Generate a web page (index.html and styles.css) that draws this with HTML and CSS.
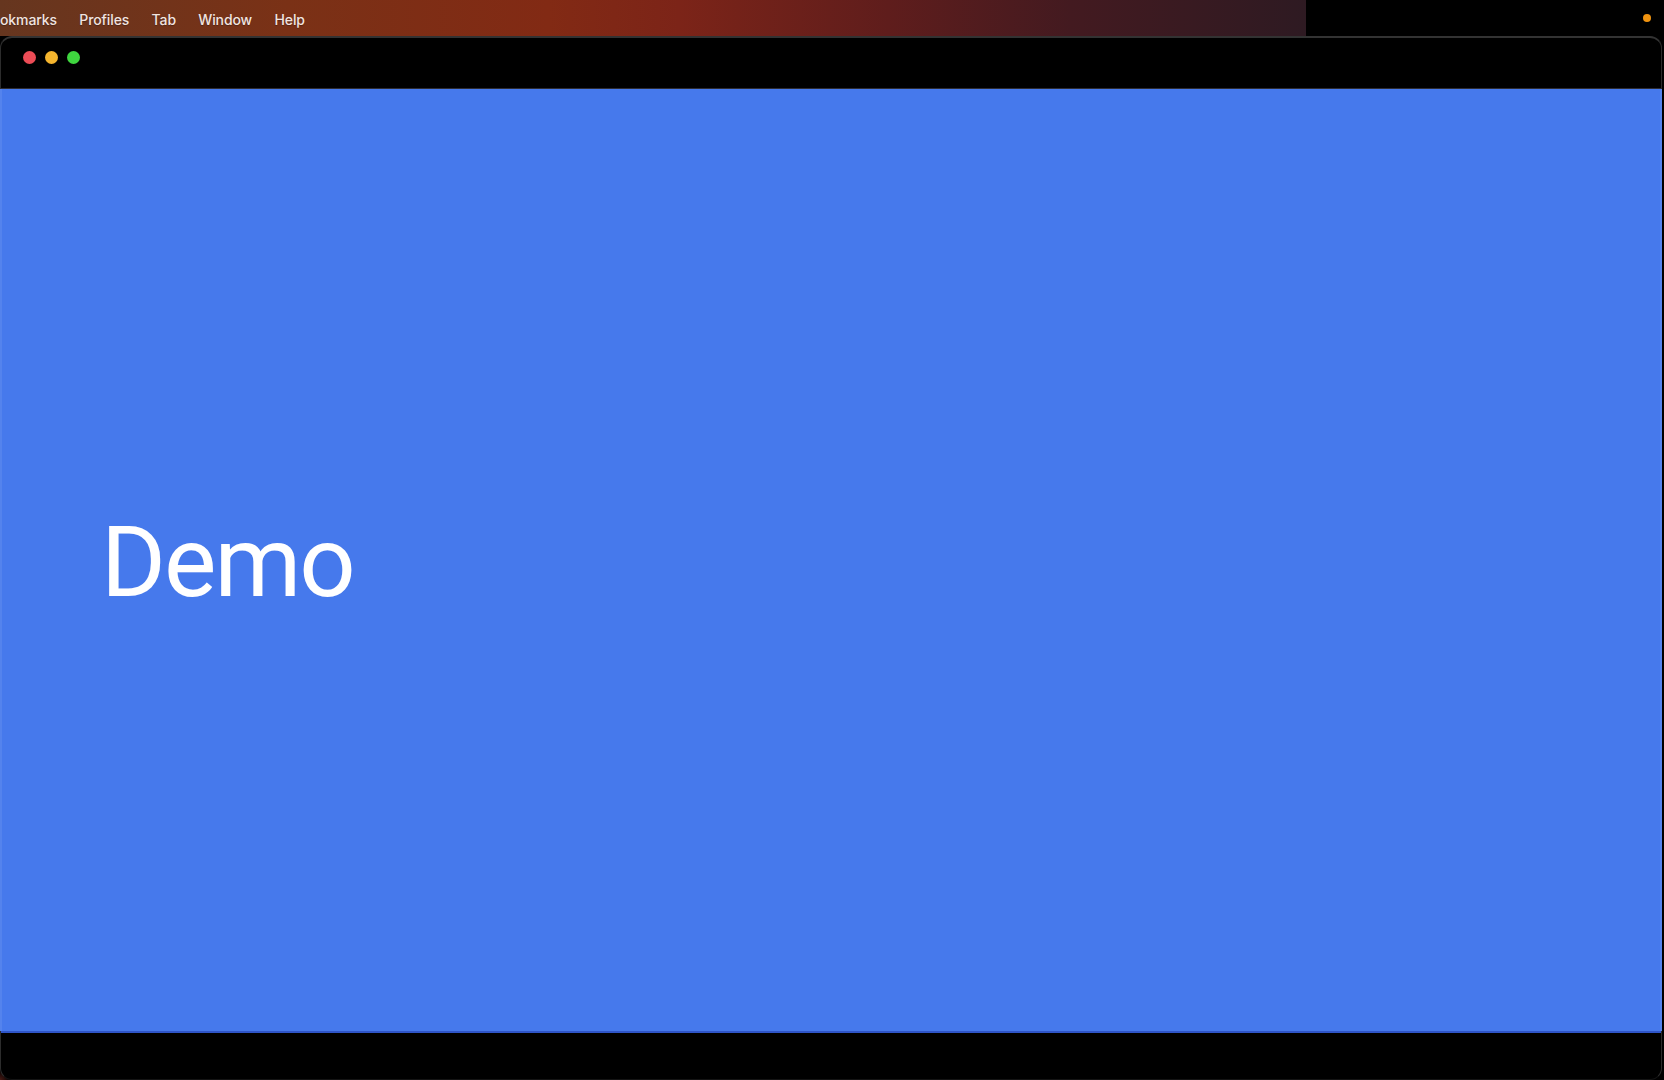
FILE: index.html
```html
<!DOCTYPE html>
<html lang="en">
<head>
    <meta charset="UTF-8">
    <meta name="viewport" content="width=device-width, initial-scale=1.0">
    <title>Demo</title>
    <link rel="stylesheet" href="styles.css">
</head>
<body>
    <div class="menubar">
        <div class="menubar-wallpaper">
            <nav class="menu">
                <span class="menu-item">okmarks</span>
                <span class="menu-item">Profiles</span>
                <span class="menu-item">Tab</span>
                <span class="menu-item">Window</span>
                <span class="menu-item">Help</span>
            </nav>
        </div>
        <div class="menubar-status">
            <span class="mic-dot"></span>
        </div>
    </div>
    <div class="window">
        <div class="titlebar">
            <span class="light light-close"></span>
            <span class="light light-min"></span>
            <span class="light light-max"></span>
        </div>
        <main class="slide">
            <h1 class="slide-title">Demo</h1>
        </main>
        <div class="window-bottom"></div>
    </div>
</body>
</html>
```

FILE: styles.css
```css
html, body {
    height: 100%;
}

body {
    margin: 0;
    background: radial-gradient(circle at 0 100%, #4a1a14 0, transparent 10px), #000;
    display: flex;
    flex-direction: column;
    overflow: hidden;
    font-family: 'Inter', 'Liberation Sans', sans-serif;
}

.menubar {
    height: 36px;
    flex-shrink: 0;
    display: flex;
}

.menubar-wallpaper {
    width: 1306px;
    background: linear-gradient(90deg, #66361f 0%, #7a3116 22%, #822a14 42%, #7c2418 52%, #5f1d1c 68%, #431a20 82%, #2e1a22 100%);
}

.menubar-status {
    flex: 1;
    display: flex;
    justify-content: flex-end;
    align-items: center;
    padding-right: 13px;
}

.mic-dot {
    width: 8px;
    height: 8px;
    margin-bottom: 1px;
    border-radius: 50%;
    background-color: #f0930f;
}

.menu {
    height: 100%;
    box-sizing: border-box;
    padding: 3px 0 0 0;
    display: flex;
    align-items: center;
    gap: 22.3px;
    overflow: hidden;
}

.menu-item {
    font-size: 14px;
    font-weight: 500;
    letter-spacing: -0.1px;
    color: #f1e4e0;
    text-shadow: 0 1px 1px rgba(0, 0, 0, 0.3);
}

.window {
    flex: 1;
    display: flex;
    flex-direction: column;
    margin-right: 2px;
    background-color: #000;
    border: 1px solid #2c2c2c;
    border-top: 2px solid #333;
    border-bottom-color: #141414;
    border-radius: 12px;
}

.titlebar {
    height: 51px;
    flex-shrink: 0;
    display: flex;
    align-items: center;
    gap: 9px;
    padding: 0 0 11px 22px;
    box-sizing: border-box;
    border-bottom: 1px solid #2c2c34;
}

.light {
    width: 13px;
    height: 13px;
    border-radius: 50%;
}

.light-close {
    background-color: #ec4c56;
}

.light-min {
    background-color: #f5b52e;
}

.light-max {
    background-color: #3fd63f;
}

.slide {
    flex: 1;
    display: flex;
    align-items: center;
    margin: 0 -1px;
    padding-left: 101px;
    background-color: #4679ec;
    box-shadow: inset 2px 0 0 rgba(255, 255, 255, 0.08), inset -2px 0 0 rgba(255, 255, 255, 0.08);
}

.slide-title {
    margin: 3px 0 0;
    font-family: 'Roboto', 'Liberation Sans', sans-serif;
    font-size: 99px;
    font-weight: 450;
    letter-spacing: -2px;
    color: #fff;
}

.window-bottom {
    height: 48px;
    flex-shrink: 0;
    border-top: 2px solid #2f55c8;
    box-sizing: border-box;
    background-color: transparent;
}
```
